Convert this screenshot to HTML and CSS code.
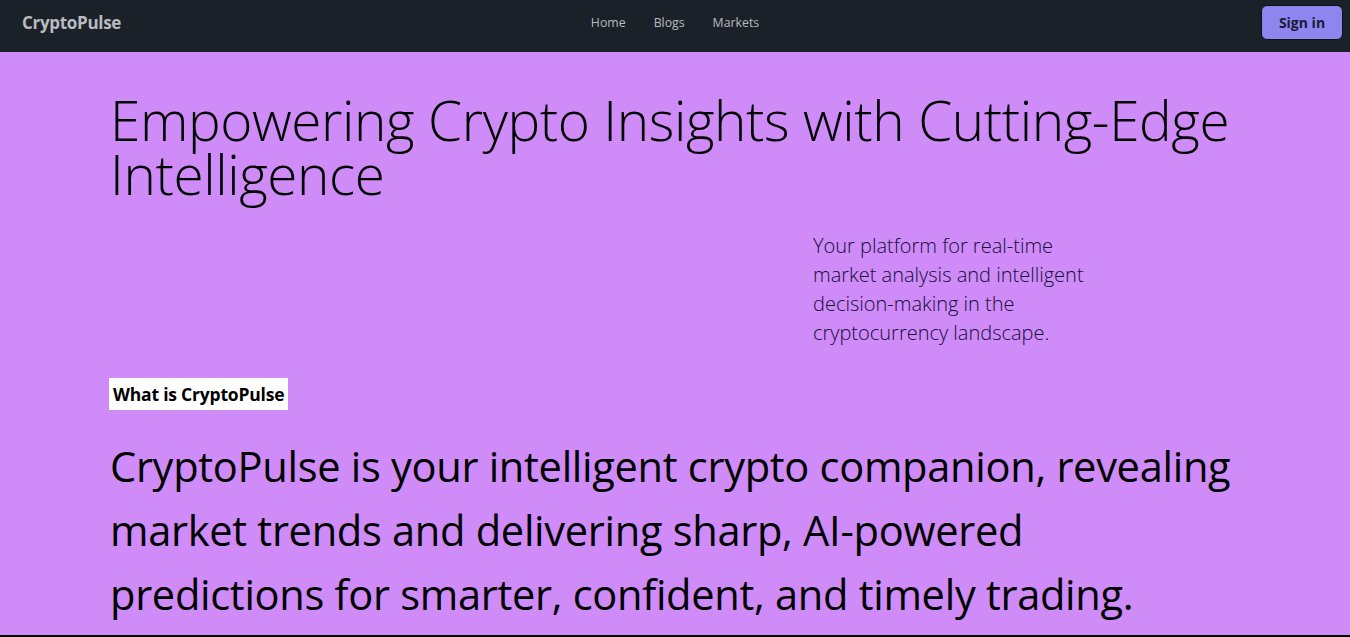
FILE: index.html
```html
<!DOCTYPE html>
<html lang="en">
<head>
<meta charset="utf-8">
<title>CryptoPulse</title>
<link rel="stylesheet" href="styles.css">
</head>
<body>
<header class="navbar">
  <a class="brand" href="#">CryptoPulse</a>
  <nav class="nav">
    <a href="#">Home</a>
    <a href="#">Blogs</a>
    <a href="#">Markets</a>
  </nav>
  <div class="actions">
    <button class="signin">Sign in</button>
  </div>
</header>
<main class="hero">
  <h1 class="title">Empowering Crypto Insights with Cutting-Edge Intelligence</h1>
  <div class="lead-row">
    <p class="lead">Your platform for real-time market analysis and intelligent decision-making in the cryptocurrency landscape.</p>
  </div>
  <h2 class="tag">What is CryptoPulse</h2>
  <p class="about">CryptoPulse is your intelligent crypto companion, revealing market trends and delivering sharp, AI-powered predictions for smarter, confident, and timely trading.</p>
</main>
</body>
</html>
```
FILE: styles.css
```css
html, body {
  margin: 0;
  padding: 0;
}
body {
  font-family: "Open Sans", "Noto Sans", sans-serif;
  background: #cf8bf8;
  color: #000;
  height: 637px;
  overflow: hidden;
}
.navbar {
  height: 52px;
  background: #1b2129;
  display: grid;
  grid-template-columns: 1fr auto 1fr;
  align-items: center;
  padding: 0 7px;
  box-sizing: border-box;
}
.brand {
  justify-self: start;
  padding-left: 15px;
  color: #b8bbbf;
  font-weight: 700;
  font-size: 17px;
  text-decoration: none;
  letter-spacing: -0.3px;
  margin-top: -8px;
}
.nav {
  display: flex;
  gap: 28px;
  margin-top: -8px;
}
.nav a {
  color: #b8bbbf;
  font-size: 12.3px;
  text-decoration: none;
}
.actions {
  justify-self: end;
  align-self: start;
  padding-top: 5px;
}
.signin {
  display: block;
  width: 82px;
  height: 35px;
  background: #8e86ee;
  border: 1px solid #0f1115;
  border-radius: 6px;
  font-family: inherit;
  font-weight: 700;
  font-size: 14px;
  color: #1c1a3a;
}
.hero {
  height: 585px;
  box-sizing: border-box;
  padding: 0 110px;
  border-bottom: 2px solid #000;
  overflow: hidden;
}
.title {
  margin: 41px 0 0;
  font-weight: 300;
  font-size: 54.9px;
  line-height: 54px;
  letter-spacing: -0.4px;
}
.lead-row {
  display: flex;
  padding-left: 703px;
  margin-top: 30px;
}
.lead {
  margin: 0;
  width: 285px;
  font-weight: 300;
  font-size: 20px;
  line-height: 29px;
  color: #140e3a;
}
.tag {
  display: inline-block;
  margin: 31px 0 0 -1px;
  padding: 4px;
  background: #fff;
  font-size: 17.5px;
  font-weight: 700;
  line-height: 24px;
  letter-spacing: -0.2px;
}
.about {
  margin: 24px 0 0;
  font-size: 41.6px;
  line-height: 64px;
  letter-spacing: -0.3px;
}
```
